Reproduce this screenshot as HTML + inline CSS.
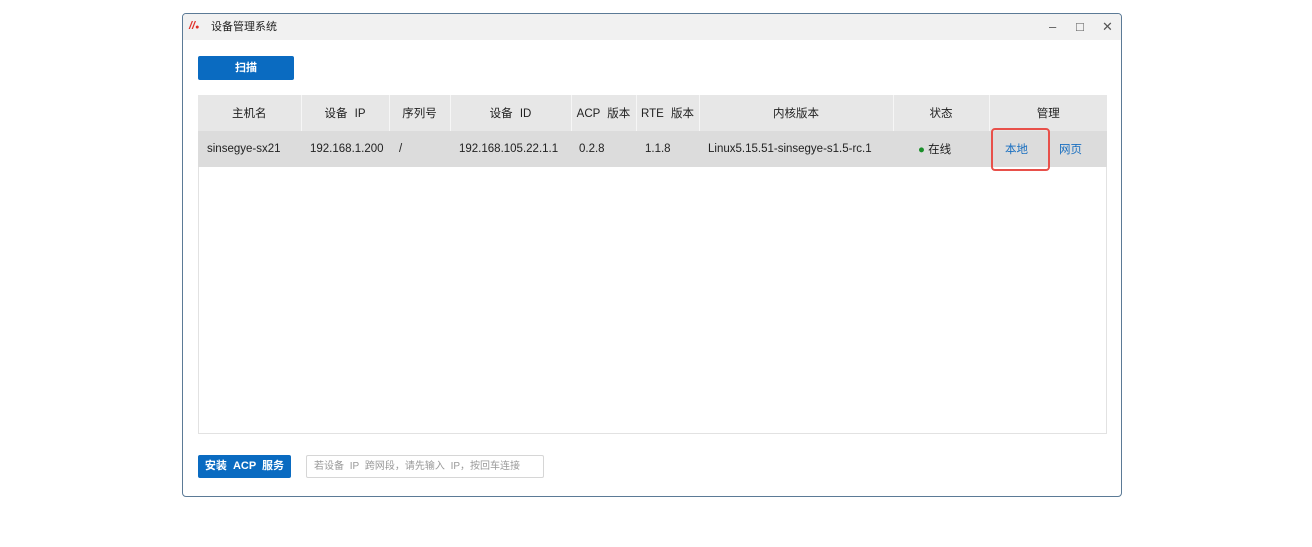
<!DOCTYPE html>
<html><head><meta charset="utf-8"><style>
*{box-sizing:border-box;margin:0;padding:0}
body{width:1312px;height:547px;background:#fff;position:relative;font-family:"Liberation Sans","Noto Sans CJK SC",sans-serif;color:#222;overflow:hidden}
.win{position:absolute;left:182px;top:13px;width:940px;height:484px;border:1px solid #5b7a96;border-radius:4px;background:#fff;overflow:hidden}
.title{position:absolute;left:0;top:0;right:0;height:26px;background:#f1f1f1;font-size:11px;line-height:26px}
.title .t{position:absolute;left:28px}
.logo{position:absolute;left:6px;top:6px;color:#e0302a;font-weight:bold;font-style:italic;font-size:11px;line-height:12px}
.ctl{position:absolute;top:0;font-size:13px;color:#555}
.btn{position:absolute;background:#0a6bc1;color:#fff;font-size:11px;font-weight:bold;text-align:center;border-radius:2px;word-spacing:3px}
table{position:absolute;left:15px;top:81px;border-collapse:collapse;font-size:11.5px;table-layout:fixed}
th{background:#e7e7e7;font-weight:normal;height:36px;border-right:1px solid #f6f6f6;text-align:center;word-spacing:4px}
td{background:#dcdcdc;height:36px;text-align:left;padding-left:9px;white-space:nowrap}
.box{position:absolute;left:15px;top:81px;width:909px;height:339px;border:1px solid #e2e2e2}
.red{position:absolute;left:808px;top:114px;width:59px;height:43px;border:2px solid #e8504a;border-radius:4px}
.inp{position:absolute;left:123px;top:441px;width:238px;height:23px;border:1px solid #d6d6d6;border-radius:2px;font-size:10px;color:#999;line-height:21px;padding-left:7px;word-spacing:3px}
a{color:#1a6fc0;text-decoration:none}
</style></head><body>
<div class="win">
<div class="title"><span class="logo">//<span style="font-size:7px">●</span></span><span class="t">设备管理系统</span>
<span class="ctl" style="left:866px">–</span><span class="ctl" style="left:893px">□</span><span class="ctl" style="left:919px">✕</span></div>
<div class="btn" style="left:15px;top:42px;width:96px;height:24px;line-height:24px">扫描</div>
<div class="box"></div>
<table>
<colgroup><col style="width:103px"><col style="width:88px"><col style="width:61px"><col style="width:121px"><col style="width:65px"><col style="width:63px"><col style="width:194px"><col style="width:96px"><col style="width:118px"></colgroup>
<tr><th>主机名</th><th>设备 IP</th><th>序列号</th><th>设备 ID</th><th>ACP 版本</th><th>RTE 版本</th><th>内核版本</th><th>状态</th><th style="border:0">管理</th></tr>
<tr><td>sinsegye-sx21</td><td>192.168.1.200</td><td style="padding-left:10px">/</td><td>192.168.105.22.1.1</td><td style="padding-left:8px">0.2.8</td><td>1.1.8</td><td>Linux5.15.51-sinsegye-s1.5-rc.1</td><td style="padding-left:25px"><span style="color:#1a8f2a">●</span> 在线</td><td style="padding-left:16px"><a style="margin-right:31px">本地</a><a>网页</a></td></tr>
</table>
<div class="red"></div>
<div class="btn" style="left:15px;top:441px;width:93px;height:23px;line-height:23px">安装 ACP 服务</div>
<div class="inp">若设备 IP 跨网段，请先输入 IP，按回车连接</div>
</div>
</body></html>
